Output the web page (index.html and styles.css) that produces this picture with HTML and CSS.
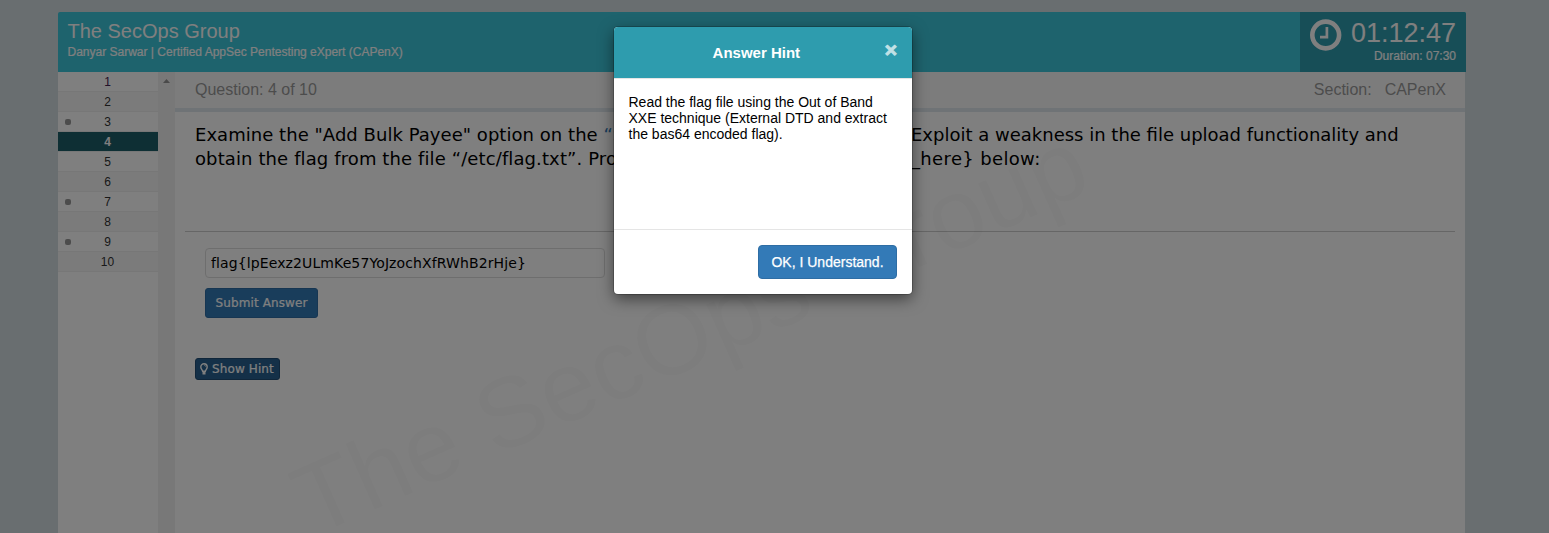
FILE: index.html
```html
<!DOCTYPE html>
<html lang="en">
<head>
<meta charset="utf-8">
<title>The SecOps Group</title>
<link rel="stylesheet" href="styles.css">
</head>
<body>
<div class="exam">
  <header class="topbar">
    <div class="brand">
      <div class="brand-name">The SecOps Group</div>
      <div class="brand-sub">Danyar Sarwar | Certified AppSec Pentesting eXpert (CAPenX)</div>
    </div>
    <div class="timer">
      <svg class="clock" width="32" height="32" viewBox="0 0 32 32" fill="none" stroke="#fff"><circle cx="15.7" cy="16" r="13.4" stroke-width="4.6"/><path d="M16.9 8v10.2H10" stroke-width="2.7"/></svg>
      <div class="timer-text">
        <div class="time">01:12:47</div>
        <div class="duration">Duration: 07:30</div>
      </div>
    </div>
  </header>
  <div class="main">
    <nav class="numbers">
      <a class="num visited">1</a>
      <a class="num">2</a>
      <a class="num answered">3</a>
      <a class="num current">4</a>
      <a class="num">5</a>
      <a class="num">6</a>
      <a class="num answered">7</a>
      <a class="num">8</a>
      <a class="num answered">9</a>
      <a class="num">10</a>
    </nav>
    <div class="scrollbar"><svg width="7" height="4" viewBox="0 0 7 4"><path d="M0 4 3.5 0 7 4z" fill="#949494"/></svg></div>
    <section class="content">
      <div class="question-bar"><span class="q-label">Question: 4 of 10</span><span class="s-label">Section:</span><span class="s-name">CAPenX</span></div>
      <div class="question">
        <div class="line"><span class="lead l1">Examine the "Add Bulk Payee" option on the <a class="link">“S</a></span><span class="t1">Exploit a weakness in the file upload functionality and</span></div>
        <div class="line"><span class="lead l2">obtain the flag from the file “/etc/flag.txt”. Pro</span><span class="t2">_here} below:</span></div>
      </div>
      <div class="answer">
        <input class="flag" type="text" value="flag{lpEexz2ULmKe57YoJzochXfRWhB2rHje}">
        <button class="btn submit">Submit Answer</button>
      </div>
      <button class="btn hint"><svg width="8" height="12" viewBox="0 0 8 12" fill="none" stroke="#fff"><path d="M2.6 8.2C2.4 6.8.8 6 .8 3.9a3.2 3.2 0 0 1 6.4 0C7.2 6 5.6 6.8 5.4 8.2z" stroke-width="1.4"/><path d="M4 2.2c1 0 1.7.6 1.7 1.5" stroke-width=".8"/><path d="M2.5 9.3h3M2.5 10.7h3" stroke-width="1.4"/></svg><span>Show Hint</span></button>
    </section>
  </div>
</div>
<svg class="watermark" width="1549" height="533"><text transform="translate(313 537) rotate(-24)">The SecOps Group</text></svg>
<div class="backdrop">
  <div class="modal">
    <div class="modal-header"><span class="modal-title">Answer Hint</span><span class="close">×</span></div>
    <div class="modal-body">Read the flag file using the Out of Band<br>XXE technique (External DTD and extract<br>the bas64 encoded flag).</div>
    <div class="modal-footer"><button class="btn ok">OK, I Understand.</button></div>
  </div>
</div>
</body>
</html>
```
FILE: styles.css
```css
* { box-sizing: border-box; }
body {
  margin: 0;
  height: 533px;
  overflow: hidden;
  padding: 12px 83px 0 58px;
  background: #d3dde1;
  font-family: "Liberation Sans", Arial, sans-serif;
  color: #000;
}
.exam { width: 1408px; height: 521px; display: flex; flex-direction: column; }
.topbar {
  height: 60px;
  flex: none;
  display: flex;
  justify-content: space-between;
  background: #3dc6da;
  color: #fff;
  border-radius: 2px 2px 0 0;
  overflow: hidden;
}
.brand { padding: 7px 9.5px; white-space: nowrap; }
.brand-name { font-size: 20px; line-height: 24px; }
.brand-sub { font-size: 12px; line-height: 18px; -webkit-text-stroke: .2px; }
.timer {
  width: 166px;
  padding: 7px 10px 0;
  display: flex;
  justify-content: space-between;
  background: #2e9cae;
}
.timer-text { text-align: right; white-space: nowrap; }
.time { font-size: 27px; line-height: 28px; }
.duration { font-size: 12px; line-height: 18px; -webkit-text-stroke: .2px; }
.main { flex: 1; display: flex; width: 1407px; background: #fff; }
.numbers { width: 100px; display: flex; flex-direction: column; }
.num {
  position: relative;
  height: 20px;
  padding-right: 1px;
  border-bottom: 1px solid #eee;
  text-align: center;
  font-size: 12px;
  line-height: 20px;
  color: #333;
}
.num:nth-child(even) { background: #f7f7f7; }
.num.visited { color: #425; }
.num.current { background: #1d5e68; color: #fff; font-weight: bold; }
.answered::before {
  content: "";
  position: absolute;
  left: 7px;
  top: 7px;
  width: 6px;
  height: 6px;
  border-radius: 2px;
  background: #999;
}
.scrollbar { width: 17px; background: #f1f1f1; display: flex; justify-content: center; padding-top: 7px; }
.content { flex: 1; display: flex; flex-direction: column; align-items: flex-start; }
.question-bar {
  width: 100%;
  height: 40px;
  padding: 0 19px 0 20px;
  display: flex;
  background: #f9f9f9;
  border-bottom: 4px solid #dfe6ed;
  color: #999;
  font-size: 16px;
  line-height: 35px;
}
.q-label { flex: 1; }
.s-name { margin-left: 13px; }
.question {
  width: 1270px;
  height: 120px;
  margin-left: 10px;
  padding: 11px 10px 0;
  border-bottom: 1px solid #ccc;
  font: 18px/24px "DejaVu Sans", Verdana, sans-serif;
}
.line { display: flex; white-space: nowrap; }
.lead { width: 716px; height: 24px; }
.l1 { letter-spacing: .04px; }
.l2 { letter-spacing: .11px; }
.t2 { letter-spacing: .35px; }
.link { color: #337ab7; }
.answer { padding: 16px 30px 0; display: flex; flex-direction: column; align-items: flex-start; gap: 10px; }
.flag {
  width: 400px;
  height: 30px;
  padding: 0 5px;
  border: 1px solid #ddd;
  border-radius: 4px;
  background: #fff;
  font: 14px "DejaVu Sans", Verdana, sans-serif;
  letter-spacing: .11px;
}
.btn {
  border: 1px solid #2e6da4;
  border-radius: 3px;
  padding: 0;
  background: #337ab7;
  color: #fff;
  white-space: nowrap;
}
.submit { width: 113px; height: 30px; font: 12px "DejaVu Sans", Verdana, sans-serif; letter-spacing: .1px; -webkit-text-stroke: .2px; }
.hint {
  width: 85px;
  height: 22px;
  margin: 40px 0 0 20px;
  display: flex;
  align-items: center;
  justify-content: center;
  gap: 4px;
  padding-right: 1px;
  background: #286090;
  border-color: #204d74;
  font: 12px "DejaVu Sans", Verdana, sans-serif;
  letter-spacing: .1px;
  -webkit-text-stroke: .2px;
}
.watermark { position: absolute; left: 0; top: 0; }
.watermark text { font: 99.3px "Liberation Sans", Arial, sans-serif; fill: rgba(0, 0, 0, .02); }
.backdrop {
  position: absolute;
  inset: 0;
  display: flex;
  align-items: flex-start;
  padding: 27px 0 0 614px;
  background: rgba(0, 0, 0, .5);
}
.modal {
  width: 298px;
  height: 267px;
  display: flex;
  flex-direction: column;
  background: #fff;
  border-radius: 4px;
  box-shadow: 0 5px 15px rgba(0, 0, 0, .5), 0 0 0 1px rgba(0, 0, 0, .2);
  overflow: hidden;
}
.modal-header {
  height: 52px;
  padding: 0 15px 0 14px;
  display: flex;
  background: #2e9cae;
  border-bottom: 1px solid #e5e5e5;
  color: #fff;
  font-weight: bold;
}
.modal-title { flex: 1; text-align: center; font-size: 15px; line-height: 51px; }
.close { font-size: 21px; line-height: 46px; opacity: .7; -webkit-text-stroke: 1px #fff; }
.modal-body { flex: 1; padding: 15px 14px 15px 14.5px; font-size: 14px; line-height: 16px; white-space: nowrap; }
.modal-footer { height: 65px; padding: 15px; border-top: 1px solid #e5e5e5; display: flex; justify-content: flex-end; }
.ok { width: 139px; height: 34px; border-radius: 4px; font: 14px "Liberation Sans", Arial, sans-serif; -webkit-text-stroke: .25px; }
```
